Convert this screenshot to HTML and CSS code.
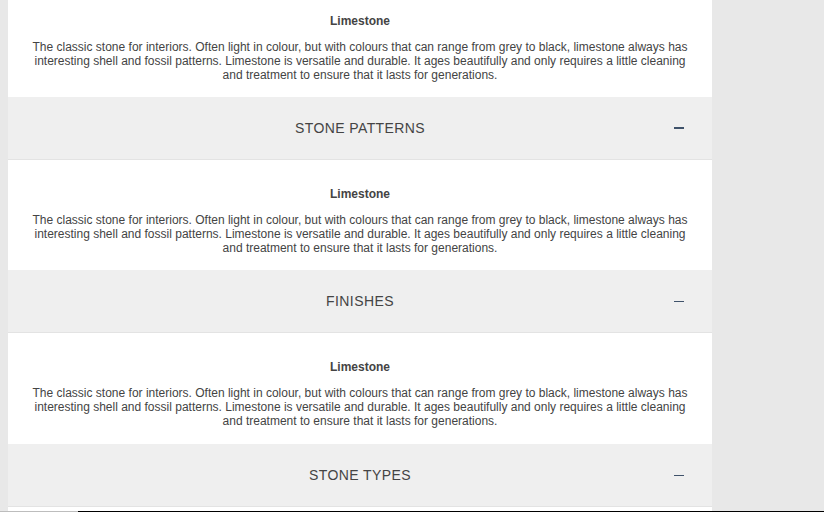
FILE: index.html
```html
<!DOCTYPE html>
<html>
<head>
<meta charset="utf-8">
<link rel="stylesheet" href="styles.css">
</head>
<body>
<div class="page">
  <div class="accordion">
    <section class="panel panel-first">
      <h3 class="panel-title">Limestone</h3>
      <p class="panel-text">The classic stone for interiors. Often light in colour, but with colours that can range from grey to black, limestone always has interesting shell and fossil patterns. Limestone is versatile and durable. It ages beautifully and only requires a little cleaning and treatment to ensure that it lasts for generations.</p>
    </section>
    <div class="acc-head">
      <span class="acc-title">STONE PATTERNS</span>
      <span class="acc-icon acc-icon-bold"></span>
    </div>
    <section class="panel">
      <h3 class="panel-title">Limestone</h3>
      <p class="panel-text">The classic stone for interiors. Often light in colour, but with colours that can range from grey to black, limestone always has interesting shell and fossil patterns. Limestone is versatile and durable. It ages beautifully and only requires a little cleaning and treatment to ensure that it lasts for generations.</p>
    </section>
    <div class="acc-head">
      <span class="acc-title">FINISHES</span>
      <span class="acc-icon"></span>
    </div>
    <section class="panel panel-tall">
      <h3 class="panel-title">Limestone</h3>
      <p class="panel-text">The classic stone for interiors. Often light in colour, but with colours that can range from grey to black, limestone always has interesting shell and fossil patterns. Limestone is versatile and durable. It ages beautifully and only requires a little cleaning and treatment to ensure that it lasts for generations.</p>
    </section>
    <div class="acc-head">
      <span class="acc-title">STONE TYPES</span>
      <span class="acc-icon"></span>
    </div>
    <section class="panel panel-last"></section>
  </div>
  <div class="side"></div>
</div>
<div class="scrollbar"><span class="scroll-thumb"></span></div>
</body>
</html>
```

FILE: styles.css
```css
html, body {
  margin: 0;
  padding: 0;
  background: #e8e8e8;
  font-family: "Liberation Sans", Arial, sans-serif;
  color: #444;
  overflow: hidden;
  height: 512px;
}

.page {
  display: flex;
  padding-left: 8px;
}

.accordion {
  width: 704px;
  display: flex;
  flex-direction: column;
}

.side {
  flex: 1;
}

.panel {
  background: #fff;
  padding: 27px 20px 15px;
  text-align: center;
}

.panel-first {
  padding-top: 14px;
}

.panel-tall {
  padding-bottom: 16px;
}

.panel-last {
  padding: 0;
  height: 20px;
}

.panel-title {
  margin: 0 0 12px;
  font-size: 12px;
  line-height: 14px;
  font-weight: bold;
  color: #444;
}

.panel-text {
  margin: 0;
  font-size: 12px;
  line-height: 14px;
  color: #444;
}

.acc-head {
  display: grid;
  grid-template-columns: 1fr auto 1fr;
  align-items: center;
  height: 62px;
  background: #efefef;
  border-bottom: 1px solid #e3e3e3;
}

.acc-title {
  grid-column: 2;
  font-size: 14px;
  letter-spacing: 0.4px;
  color: #444;
  line-height: 16px;
}

.acc-icon {
  grid-column: 3;
  justify-self: end;
  margin-right: 28px;
  width: 10px;
  height: 1px;
  background: #3f526a;
}

.acc-icon-bold {
  height: 2px;
}

.scrollbar {
  position: fixed;
  left: 0;
  right: 0;
  bottom: 0;
  height: 1px;
  background: #000;
}

.scroll-thumb {
  display: block;
  width: 78px;
  height: 1px;
  background: #bdbdbd;
}
```
